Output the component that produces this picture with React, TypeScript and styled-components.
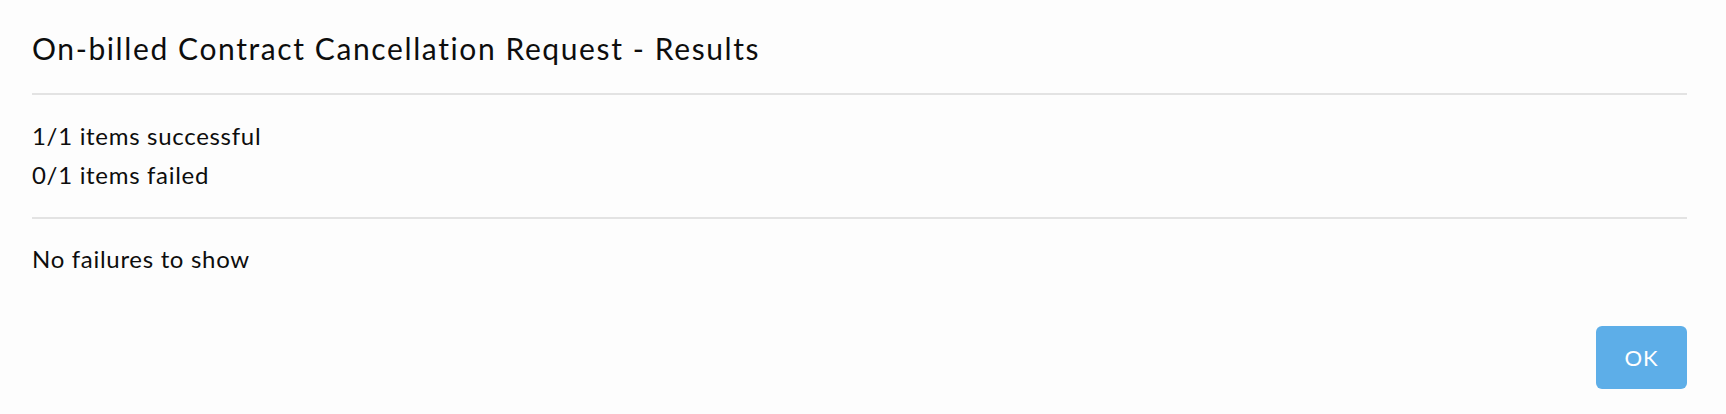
import React from "react";
import styled, { createGlobalStyle } from "styled-components";

const GlobalStyle = createGlobalStyle`
  html, body {
    margin: 0;
    padding: 0;
    background: #fdfdfd;
  }
  body {
    font-family: Lato, "Open Sans", Arial, sans-serif;
    color: #0d0d0d;
  }
`;

const Modal = styled.div`
  width: 1726px;
  height: 414px;
  box-sizing: border-box;
  padding: 0 39px 0 32px;
  background: #fdfdfd;
  display: flex;
  flex-direction: column;
`;

const Header = styled.div`
  padding: 30px 0 27px;
  border-bottom: 2px solid #e3e3e3;
`;

const Title = styled.h4`
  margin: 0;
  font-size: 30px;
  line-height: 36px;
  font-weight: 400;
  letter-spacing: 1.6px;
  color: #0d0d0d;
`;

const Section = styled.div<{ $top: number; $bottom: number; $divider?: boolean }>`
  padding: ${({ $top }) => $top}px 0 ${({ $bottom }) => $bottom}px;
  border-bottom: ${({ $divider }) => ($divider ? "2px solid #e3e3e3" : "none")};
`;

const Line = styled.div`
  font-size: 24px;
  line-height: 39px;
  letter-spacing: 0.7px;
  color: #0d0d0d;
`;

const Footer = styled.div`
  display: flex;
  justify-content: flex-end;
  padding-top: 48px;
`;

const OkButton = styled.button`
  width: 91px;
  height: 63px;
  border: none;
  border-radius: 6px;
  background: #5daee8;
  color: #fff;
  font-family: Lato, "Open Sans", Arial, sans-serif;
  font-size: 22px;
  letter-spacing: 1px;
  cursor: pointer;
`;

export default function App() {
  return (
    <>
      <GlobalStyle />
      <Modal>
        <Header>
          <Title>On-billed Contract Cancellation Request - Results</Title>
        </Header>
        <Section $top={21} $bottom={23} $divider>
          <Line>1/1 items successful</Line>
          <Line>0/1 items failed</Line>
        </Section>
        <Section $top={20} $bottom={0}>
          <Line>No failures to show</Line>
        </Section>
        <Footer>
          <OkButton>OK</OkButton>
        </Footer>
      </Modal>
    </>
  );
}
